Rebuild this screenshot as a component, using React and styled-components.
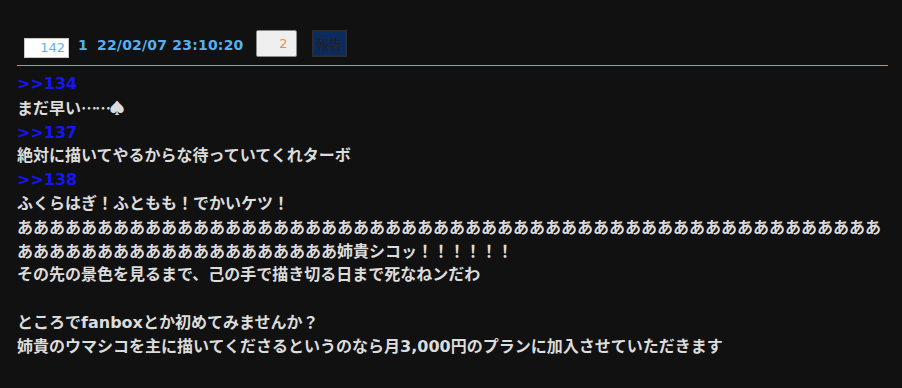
import React from 'react'
import styled, { createGlobalStyle } from 'styled-components'

const GlobalStyle = createGlobalStyle`
	html, body {
		margin: 0;
		padding: 0;
		background-color: #111111;
	}
`

const Page = styled.div`
	width: 902px;
	height: 388px;
	box-sizing: border-box;
	padding: 30px 14px 0 17px;
	background-color: #111111;
	overflow: hidden;
`

const Header = styled.div`
	display: flex;
	align-items: flex-end;
	padding-left: 7px;
	height: 28px;
`

const NumberBox = styled.div`
	width: 45px;
	height: 20px;
	box-sizing: border-box;
	background-color: #ffffff;
	border: 1px solid #c8c8c8;
	color: #5fb2f2;
	font-family: "DejaVu Sans", sans-serif;
	font-size: 13px;
	line-height: 18px;
	text-align: right;
	padding-right: 3px;
`

const Meta = styled.span`
	color: #55b0f2;
	font-family: "DejaVu Sans", sans-serif;
	font-weight: bold;
	font-size: 14px;
	letter-spacing: 0.2px;
	line-height: 16px;
	margin-left: ${props => props.gap}px;
	margin-bottom: 5px;
	white-space: pre;
`

const VoteBox = styled.div`
	width: 41px;
	height: 27px;
	box-sizing: border-box;
	margin-left: 12px;
	margin-bottom: 1px;
	background-color: #efefef;
	border: 1px solid #8a8a8a;
	border-radius: 2px;
	color: #f08a4a;
	font-family: "DejaVu Sans", sans-serif;
	font-size: 13px;
	line-height: 25px;
	text-align: right;
	padding-right: 8px;
`

const ReportButton = styled.button`
	width: 35px;
	height: 27px;
	box-sizing: border-box;
	margin-left: 15px;
	margin-bottom: 1px;
	padding: 0;
	background-color: #0b2a5e;
	border: 2px solid #2c2c2c;
	color: #222222;
	font-family: "Noto Sans CJK JP", sans-serif;
	font-size: 13px;
	font-weight: 500;
	line-height: 21px;
`

const Rule = styled.div`
	height: 1px;
	background-color: #4fb0f5;
	margin-top: 7px;
`

const Body = styled.div`
	margin-top: 6px;
	font-family: "DejaVu Sans", "Noto Sans CJK JP", sans-serif;
	font-weight: bold;
	font-size: 16px;
	line-height: 23.8px;
	color: #dcdcdc;
	word-break: break-all;
`

const Anchor = styled.div`
	color: #1515f5;
`

const Line = styled.div`
	min-height: 23.8px;
`

const Cjk = styled.span`
	font-family: "Noto Sans CJK JP", sans-serif;
	letter-spacing: -2px;
`

const lines = [
	{ anchor: '>>134' },
	{ text: <>まだ早い<Cjk>……♠</Cjk></> },
	{ anchor: '>>137' },
	{ text: '絶対に描いてやるからな待っていてくれターボ' },
	{ anchor: '>>138' },
	{ text: 'ふくらはぎ！ふともも！でかいケツ！' },
	{ text: 'あ'.repeat(74) + '姉貴シコッ！！！！！！' },
	{ text: 'その先の景色を見るまで、己の手で描き切る日まで死なねンだわ' },
	{ text: '' },
	{ text: 'ところでfanboxとか初めてみませんか？' },
	{ text: '姉貴のウマシコを主に描いてくださるというのなら月3,000円のプランに加入させていただきます' },
]

export default function App() {
	return (
		<Page>
			<GlobalStyle />
			<Header>
				<NumberBox>142</NumberBox>
				<Meta gap={9}>1</Meta>
				<Meta gap={9}>22/02/07 23:10:20</Meta>
				<VoteBox>2</VoteBox>
				<ReportButton>報告</ReportButton>
			</Header>
			<Rule />
			<Body>
				{lines.map((l, i) =>
					l.anchor
						? <Anchor key={i}>{l.anchor}</Anchor>
						: <Line key={i}>{l.text}</Line>
				)}
			</Body>
		</Page>
	)
}
